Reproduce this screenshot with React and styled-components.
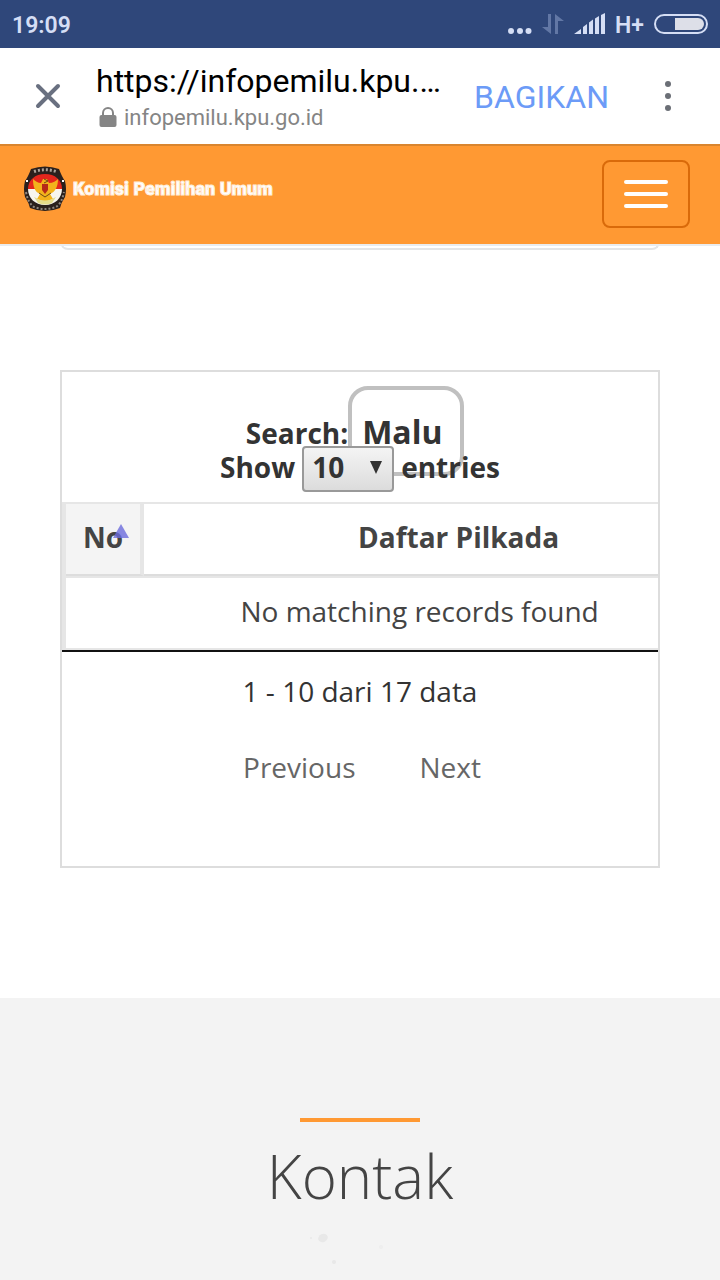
import styled, { createGlobalStyle } from 'styled-components';

const colors = {
  status: '#2f477a',
  statusText: '#d5def5',
  orange: '#ff9933',
  orangeDark: '#d96a0a',
  link: '#6c9bf7',
  text: '#333333',
  cell: '#444444',
  muted: '#666666',
  line: '#e6e6e6',
  border: '#dddddd',
  footer: '#f3f3f3',
};

const GlobalStyle = createGlobalStyle`
  * {
    box-sizing: border-box;
  }

  body {
    margin: 0;
    background: #ffffff;
    color: ${colors.text};
    font-family: 'Open Sans', 'Noto Sans', sans-serif;
    font-size: 28px;
    line-height: 40px;
  }

  button, input, select {
    margin: 0;
    font: inherit;
    color: inherit;
  }
`;

const Page = styled.div`
  display: flex;
  flex-direction: column;
  min-height: 100vh;
  overflow: hidden;
`;

// Status bar
const StatusBar = styled.div`
  display: flex;
  align-items: center;
  justify-content: space-between;
  height: 48px;
  padding: 4px 12px 0;
  background: ${colors.status};
  color: ${colors.statusText};
  font-family: Roboto, sans-serif;
  font-size: 23px;
  font-weight: 600;
`;

const StatusIcons = styled.div`
  display: flex;
  align-items: center;
  gap: 10px;

  svg {
    display: block;
    margin-top: -4px;
  }
`;

// Browser bar
const BrowserBar = styled.header`
  display: flex;
  align-items: center;
  height: 96px;
  padding: 2px 32px 0 28px;
  background: #ffffff;
  font-family: Roboto, sans-serif;
`;

const IconButton = styled.button`
  display: flex;
  align-items: center;
  justify-content: center;
  width: 40px;
  height: 48px;
  padding: 0 0 2px;
  border: 0;
  background: none;
`;

const Address = styled.div`
  flex: 1;
  min-width: 0;
  padding: 2px 0 0 28px;
`;

const PageUrl = styled.div`
  overflow: hidden;
  color: #000000;
  font-size: 32px;
  line-height: 40px;
  white-space: nowrap;
  text-overflow: ellipsis;
`;

const Host = styled.div`
  display: flex;
  align-items: center;
  gap: 7px;
  padding-left: 3px;
  color: #858585;
  font-size: 22px;
  line-height: 34px;

  svg {
    margin-bottom: 2px;
  }
`;

const ShareButton = styled.button`
  margin: 0 39px 0 27px;
  padding: 0;
  border: 0;
  background: none;
  color: ${colors.link};
  font-size: 32px;
`;

const Navbar = styled.nav`
  position: relative;
  z-index: 1;
  display: flex;
  align-items: flex-start;
  justify-content: space-between;
  height: 102px;
  padding: 14px 30px 0 22px;
  border-top: 2px solid #d9852f;
  border-bottom: 2px solid #e9ecef;
  background: ${colors.orange};
`;

const Brand = styled.a`
  display: flex;
  align-items: flex-start;
  gap: 5px;
  padding-top: 5px;
  color: #ffffff;
  text-decoration: none;
`;

const BrandName = styled.span`
  padding-top: 12px;
  font-family: Roboto, sans-serif;
  font-size: 18px;
  font-weight: 900;
  line-height: 24px;
  -webkit-text-stroke: 1px #ffeeda;
`;

const Toggler = styled.button`
  display: flex;
  flex-direction: column;
  align-items: center;
  justify-content: center;
  gap: 8px;
  width: 88px;
  height: 68px;
  padding: 0;
  border: 2px solid ${colors.orangeDark};
  border-radius: 8px;
  background: none;
`;

const TogglerBar = styled.span`
  width: 44px;
  height: 4px;
  border-radius: 2px;
  background: #ffffff;
`;

// Main content
const Content = styled.main`
  padding: 0 60px 130px;
`;

const CardEnd = styled.div`
  height: 20px;
  margin: -16px 0 120px;
  border: 2px solid #e3e5e7;
  border-top: 0;
  border-radius: 0 0 8px 8px;
`;

const Panel = styled.section`
  overflow: hidden;
  padding: 14px 0 79px;
  border: 2px solid ${colors.border};
`;

const SearchRow = styled.div`
  display: flex;
  align-items: center;
  justify-content: center;
  padding-right: 10px;
  font-weight: 700;
`;

const SearchLabel = styled.label`
  padding-top: 4px;
`;

const SearchInput = styled.input`
  width: 116px;
  height: 90px;
  padding: 0 10px;
  border: 4px solid #c0c0c0;
  border-radius: 20px;
  background: #ffffff;
  font-size: 32px;
  outline: 0;
`;

// The length row rides over the bottom of the search box
const LengthRow = styled.label`
  position: relative;
  display: flex;
  align-items: flex-start;
  justify-content: center;
  gap: 7px;
  margin: -30px 0 10px;
  font-weight: 700;
  line-height: 42px;
`;

const SelectWrap = styled.span`
  position: relative;
  display: flex;
`;

const LengthSelect = styled.select`
  width: 92px;
  height: 46px;
  padding: 0 8px 4px;
  border: 2px solid #999999;
  border-radius: 4px;
  background: linear-gradient(#f4f4f4, #dcdcdc);
  line-height: 38px;
  appearance: none;
  outline: 0;
`;

const SelectArrow = styled.svg`
  position: absolute;
  top: 15px;
  right: 12px;
  pointer-events: none;
`;

const TableScroll = styled.div`
  overflow: hidden;
  border-bottom: 2px solid #111111;
`;

// Wider than the panel, like a table that scrolls sideways
const Table = styled.table`
  width: 120%;
  border: 2px solid ${colors.line};
  border-left-width: 4px;
  border-right-width: 4px;
  border-spacing: 0;
  color: ${colors.cell};
`;

const HeadCell = styled.th`
  position: relative;
  width: ${(props) => (props.$sorted ? '78px' : 'auto')};
  height: 72px;
  padding: 0 0 4px;
  border-bottom: 2px solid ${colors.border};
  border-right: ${(props) => (props.$sorted ? `4px solid ${colors.line}` : '0')};
  background: ${(props) => (props.$sorted ? '#f4f4f4' : '#ffffff')};
`;

const SortMark = styled.svg`
  position: absolute;
  top: 20px;
  right: 11px;
`;

const BodyCell = styled.td`
  height: 72px;
  padding: 0 0 4px;
  border-top: 2px solid ${colors.line};
  text-align: center;
`;

const Info = styled.p`
  margin: 19px 0 36px;
  text-align: center;
`;

const Pager = styled.div`
  display: flex;
  justify-content: center;
  gap: 64px;
  padding-left: 4px;
`;

const PageLink = styled.a`
  color: ${colors.muted};
  text-decoration: none;
`;

// Contact section
const Contact = styled.section`
  display: flex;
  flex: 1;
  flex-direction: column;
  align-items: center;
  padding-top: 120px;
  background: ${colors.footer};
`;

const Rule = styled.div`
  width: 120px;
  height: 4px;
  background: ${colors.orange};
`;

const ContactTitle = styled.h2`
  margin: 12px 0 0;
  color: ${colors.cell};
  font-size: 60px;
  font-weight: 300;
  line-height: 84px;
`;

const StatusGlyphs = () => (
  <>
    <svg width="24" height="24" viewBox="0 0 24 24" fill="currentColor" aria-hidden="true">
      <circle cx="3" cy="19" r="3" />
      <circle cx="12" cy="19" r="3" />
      <circle cx="20.5" cy="19" r="3" />
    </svg>
    <svg width="22" height="24" viewBox="0 0 22 24" fill="#6277a5" aria-hidden="true">
      <path d="M6 2h3v20L0 15h6zM13 22h3V9h6L13 2z" />
    </svg>
    <svg width="31" height="24" viewBox="0 0 31 24" fill="currentColor" aria-hidden="true">
      <path d="M0 22l7-5v5zM9 15l4-3v10H9zM15 10.5l4-3V22h-4zM21 6.5l4-2.5V22h-4zM27 3l4-2v21h-4z" />
    </svg>
  </>
);

const BatteryIcon = () => (
  <svg width="54" height="20" viewBox="0 0 54 20" aria-hidden="true">
    <rect x="1" y="1" width="52" height="18" rx="9" fill="none" stroke="currentColor" strokeWidth="2" />
    <path d="M21 4h23a6 6 0 0 1 0 12H21z" fill="#dddfe8" />
  </svg>
);

const LockIcon = () => (
  <svg width="18" height="22" viewBox="0 0 18 22" aria-hidden="true">
    <path d="M4 10V7a5 5 0 0 1 10 0v3" fill="none" stroke="currentColor" strokeWidth="2" />
    <rect x="0.5" y="9" width="17" height="12" rx="2" fill="currentColor" />
  </svg>
);

const KpuLogo = () => (
  <svg width="46" height="48" viewBox="0 0 46 48" aria-hidden="true">
    <path d="M9 4Q23 -1 37 4Q40 12 43 16Q45 24 43 32Q39 38 38 43Q23 49 8 43Q7 38 3 32Q1 24 3 16Q6 12 9 4z" fill="#2a201d" />
    <path d="M6 24C6 15 13 9 23 9s17 6 17 15z" fill="#e3261c" />
    <path d="M6 24h34c0 9-7 16-17 16S6 33 6 24z" fill="#f7f5ee" />
    <path d="M11 14c2 2 5 4 8 4l2-4h4l2 4c4 0 7-2 9-4 0 8-3 13-8 15l3 5-8 3-8-3 3-5c-5-2-7-7-7-15z" fill="#f3b31c" />
    <path d="M20 19h6v6l-3 4-3-4z" fill="#b72a18" />
    <path d="M22 14l4 2-4 2M17 28l6 4 6-4" fill="none" stroke="#6b4a14" />
    <path d="M12 32q11 7 22 0l-4 6q-7 3-14 0z" fill="#e4dc8c" />
    <path d="M12 6.5Q23 3 34 6.5" fill="none" stroke="#aca29a" strokeWidth="3" strokeDasharray="2 2" />
    <path d="M4 27Q6 38 12 42Q23 46 34 42Q40 38 42 27" fill="none" stroke="#8f8780" strokeWidth="2" strokeDasharray="2 2" />
    <path d="M4 16h2M40 16h2" stroke="#ffffff" strokeWidth="2" />
  </svg>
);

const LoadingDots = () => (
  <svg width="100" height="50" viewBox="0 0 100 50" fill="#e8e8e8" aria-hidden="true">
    <ellipse cx="13" cy="20" rx="5" ry="4" transform="rotate(-25 13 20)" />
    <circle cx="1" cy="20" r="1" />
    <circle cx="24" cy="44" r="2" />
    <circle cx="71" cy="29" r="2" fill="#eeeeee" />
  </svg>
);

export default function App() {
  return (
    <>
      <GlobalStyle />
      <Page>
        <StatusBar>
          <span>19:09</span>
          <StatusIcons>
            <StatusGlyphs />
            <span>H+</span>
            <BatteryIcon />
          </StatusIcons>
        </StatusBar>

        <BrowserBar>
          <IconButton type="button" aria-label="Tutup">
            <svg width="26" height="26" viewBox="0 0 26 26" stroke="#697080" strokeWidth="4" strokeLinecap="round">
              <path d="M3 3l20 20M23 3L3 23" />
            </svg>
          </IconButton>
          <Address>
            <PageUrl>https://infopemilu.kpu.…</PageUrl>
            <Host>
              <LockIcon />
              infopemilu.kpu.go.id
            </Host>
          </Address>
          <ShareButton type="button">BAGIKAN</ShareButton>
          <IconButton type="button" aria-label="Menu">
            <svg width="8" height="32" viewBox="0 0 8 32" fill="#6b6f76">
              <circle cx="4" cy="4" r="3" />
              <circle cx="4" cy="16" r="3" />
              <circle cx="4" cy="28" r="3" />
            </svg>
          </IconButton>
        </BrowserBar>

        <Navbar>
          <Brand href="#">
            <KpuLogo />
            <BrandName>Komisi Pemilihan Umum</BrandName>
          </Brand>
          <Toggler type="button" aria-label="Toggle navigation">
            <TogglerBar />
            <TogglerBar />
            <TogglerBar />
          </Toggler>
        </Navbar>

        <Content>
          <CardEnd />
          <Panel>
            <SearchRow>
              <SearchLabel htmlFor="search">Search:</SearchLabel>
              <SearchInput id="search" type="text" defaultValue="Malu" />
            </SearchRow>
            <LengthRow htmlFor="length">
              Show
              <SelectWrap>
                <LengthSelect id="length" defaultValue="10">
                  <option>10</option>
                  <option>25</option>
                  <option>50</option>
                </LengthSelect>
                <SelectArrow width="12" height="13" viewBox="0 0 12 13" fill="#333333">
                  <path d="M0 0h12L6 13z" />
                </SelectArrow>
              </SelectWrap>
              entries
            </LengthRow>
            <TableScroll>
              <Table>
                <thead>
                  <tr>
                    <HeadCell $sorted>
                      No
                      <SortMark width="16" height="14" viewBox="0 0 16 14" fill="#6c6cdc" fillOpacity="0.8">
                        <path d="M8 0l8 14H0z" />
                      </SortMark>
                    </HeadCell>
                    <HeadCell>Daftar Pilkada</HeadCell>
                  </tr>
                </thead>
                <tbody>
                  <tr>
                    <BodyCell colSpan="2">No matching records found</BodyCell>
                  </tr>
                </tbody>
              </Table>
            </TableScroll>
            <Info>1 - 10 dari 17 data</Info>
            <Pager>
              <PageLink href="#">Previous</PageLink>
              <PageLink href="#">Next</PageLink>
            </Pager>
          </Panel>
        </Content>

        <Contact>
          <Rule />
          <ContactTitle>Kontak</ContactTitle>
          <LoadingDots />
        </Contact>
      </Page>
    </>
  );
}
